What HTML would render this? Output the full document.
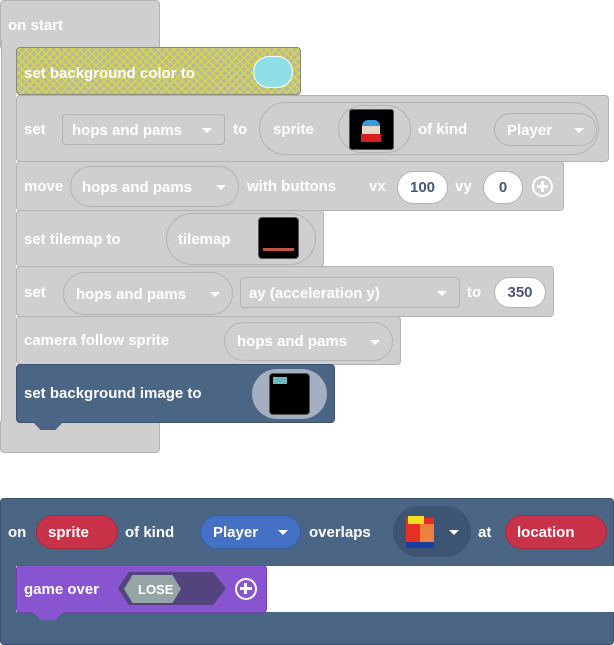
<!DOCTYPE html>
<html><head><style>
*{margin:0;padding:0;box-sizing:border-box}
body{width:614px;height:645px;background:#fff;position:relative;overflow:hidden;font:bold 15px "Liberation Sans",sans-serif;color:#fff}
.a{position:absolute}
.g{background:#cfcfcf;border:1px solid #b3b3b3;border-radius:4px}
.t{position:absolute;white-space:nowrap;line-height:18px;margin-top:2px}
.pill{position:absolute;border:1px solid #b3b3b3;border-radius:30px}
.dd::after{content:"";position:absolute;right:12px;top:50%;margin-top:-2px;border-left:5px solid transparent;border-right:5px solid transparent;border-top:5px solid #fff}
.w{position:absolute;background:#fff;border:1px solid #b3b3b3;border-radius:20px;color:#4a5874;text-align:center}
.notch{position:absolute;width:30px;height:8px;clip-path:polygon(0 0,100% 0,75% 100%,25% 100%)}
</style></head><body>

<!-- on start -->
<div class="a g" style="left:0;top:0;width:160px;height:50px"></div>
<div class="a" style="left:1px;top:40px;width:15px;height:390px;background:#cfcfcf;border-left:1px solid #b3b3b3"></div>
<div class="a g" style="left:0;top:421px;width:160px;height:32px;border-top:none;border-radius:0 0 4px 4px"></div>
<div class="t" style="left:8px;top:15px">on start</div>

<!-- set background color -->
<div class="a" style="left:16px;top:47px;width:285px;height:48px;border:1px solid #8a8a70;border-radius:4px;background-color:#b8b8a0;background-image:repeating-linear-gradient(45deg,transparent 0 4px,#d6d64a 4px 5.5px),repeating-linear-gradient(-45deg,transparent 0 4px,#d6d64a 4px 5.5px)"></div>
<div class="notch" style="left:33px;top:95px;background:#c6c690"></div>
<div class="t" style="left:24px;top:63px">set background color to</div>
<div class="a" style="left:253px;top:56px;width:40px;height:32px;background:#8ee0e6;border:1px solid #fff;border-radius:16px"></div>

<!-- set sprite -->
<div class="a g" style="left:16px;top:95px;width:593px;height:67px"></div>
<div class="t" style="left:24px;top:119px">set</div>
<div class="a dd" style="left:62px;top:114px;width:163px;height:31px;border:1px solid #b3b3b3;border-radius:4px"><span class="t" style="left:9px;top:5px">hops and pams</span></div>
<div class="t" style="left:233px;top:119px">to</div>
<div class="pill" style="left:259px;top:102px;width:340px;height:53px"></div>
<div class="t" style="left:273px;top:119px">sprite</div>
<div class="pill" style="left:338px;top:105px;width:73px;height:48px"></div>
<div class="a" style="left:349px;top:109px;width:45px;height:41px;background:#000;border-radius:3px;border:1px solid #555"></div>
<div class="a" style="left:362px;top:120px;width:18px;height:6px;background:#3a9bd8;border-radius:6px 6px 0 0"></div>
<div class="a" style="left:362px;top:126px;width:18px;height:8px;background:#e8d8c8"></div>
<div class="a" style="left:361px;top:134px;width:20px;height:8px;background:#d82020"></div>
<div class="t" style="left:418px;top:119px">of kind</div>
<div class="pill dd" style="left:494px;top:113px;width:103px;height:33px"><span class="t" style="left:12px;top:6px">Player</span></div>

<!-- move -->
<div class="a g" style="left:16px;top:161px;width:548px;height:50px"></div>
<div class="t" style="left:24px;top:176px">move</div>
<div class="pill dd" style="left:70px;top:166px;width:169px;height:41px"><span class="t" style="left:11px;top:10px">hops and pams</span></div>
<div class="t" style="left:247px;top:176px">with buttons</div>
<div class="t" style="left:369px;top:176px">vx</div>
<div class="w" style="left:397px;top:171px;width:51px;height:33px;line-height:31px">100</div>
<div class="t" style="left:455px;top:176px">vy</div>
<div class="w" style="left:483px;top:171px;width:40px;height:33px;line-height:31px">0</div>
<div class="a" style="left:532px;top:176px;width:21px;height:21px;border:2px solid #fff;border-radius:50%"></div>
<div class="a" style="left:537px;top:185px;width:11px;height:3px;background:#fff"></div>
<div class="a" style="left:541px;top:181px;width:3px;height:11px;background:#fff"></div>

<!-- set tilemap -->
<div class="a g" style="left:16px;top:210px;width:308px;height:57px"></div>
<div class="t" style="left:24px;top:229px">set tilemap to</div>
<div class="pill" style="left:166px;top:213px;width:150px;height:52px"></div>
<div class="t" style="left:178px;top:229px">tilemap</div>
<div class="a" style="left:258px;top:217px;width:41px;height:42px;background:#000;border-radius:4px;border:1px solid #555"></div>
<div class="a" style="left:263px;top:248px;width:31px;height:3px;background:#c0563a"></div>

<!-- set ay -->
<div class="a g" style="left:16px;top:266px;width:538px;height:51px"></div>
<div class="t" style="left:24px;top:282px">set</div>
<div class="pill dd" style="left:63px;top:272px;width:170px;height:43px"><span class="t" style="left:12px;top:11px">hops and pams</span></div>
<div class="a dd" style="left:240px;top:277px;width:220px;height:31px;border:1px solid #b3b3b3;border-radius:4px"><span class="t" style="left:8px;top:5px">ay (acceleration y)</span></div>
<div class="t" style="left:467px;top:282px">to</div>
<div class="w" style="left:494px;top:277px;width:52px;height:31px;line-height:29px">350</div>

<!-- camera -->
<div class="a g" style="left:16px;top:316px;width:385px;height:49px"></div>
<div class="t" style="left:24px;top:330px">camera follow sprite</div>
<div class="pill dd" style="left:224px;top:322px;width:169px;height:39px"><span class="t" style="left:12px;top:8px">hops and pams</span></div>

<!-- set background image -->
<div class="a" style="left:16px;top:364px;width:319px;height:59px;background:#4b6584;border:1px solid #3c5170;border-radius:4px"></div>
<div class="notch" style="left:33px;top:422px;background:#4b6584"></div>
<div class="t" style="left:24px;top:383px">set background image to</div>
<div class="a" style="left:252px;top:369px;width:75px;height:50px;background:#a5afc2;border-radius:25px"></div>
<div class="a" style="left:269px;top:373px;width:41px;height:42px;background:#000;border-radius:4px;border:1px solid #555"></div>
<div class="a" style="left:273px;top:377px;width:14px;height:7px;background:#6fb5c0"></div>

<!-- event block -->
<div class="a" style="left:0;top:498px;width:614px;height:68px;background:#4b6584;border:1px solid #3c5170;border-radius:4px 4px 0 0;border-bottom:none"></div>
<div class="a" style="left:0;top:565px;width:16px;height:50px;background:#4b6584;border-left:1px solid #3c5170"></div>
<div class="a" style="left:0;top:612px;width:614px;height:33px;background:#4b6584;border:1px solid #3c5170;border-top:none;border-radius:0 0 4px 4px"></div>
<div class="t" style="left:8px;top:522px">on</div>
<div class="a" style="left:36px;top:515px;width:82px;height:34px;background:#c8334a;border:1px solid #a82a3e;border-radius:17px"><span class="t" style="left:11px;top:6px">sprite</span></div>
<div class="t" style="left:125px;top:522px">of kind</div>
<div class="a dd" style="left:200px;top:515px;width:101px;height:34px;background:#4471c4;border:1px solid #365da5;border-radius:17px"><span class="t" style="left:12px;top:6px">Player</span></div>
<div class="t" style="left:309px;top:522px">overlaps</div>
<div class="a dd" style="left:393px;top:506px;width:78px;height:51px;background:#3d5472;border-radius:26px"></div>
<div class="a" style="left:406px;top:518px;width:28px;height:30px;background:#e83020"></div>
<div class="a" style="left:408px;top:516px;width:16px;height:8px;background:#f0e020"></div>
<div class="a" style="left:420px;top:524px;width:14px;height:18px;background:#f08040"></div>
<div class="a" style="left:406px;top:542px;width:28px;height:6px;background:#1840a0"></div>
<div class="t" style="left:478px;top:522px">at</div>
<div class="a" style="left:505px;top:515px;width:102px;height:34px;background:#c8334a;border:1px solid #a82a3e;border-radius:17px"><span class="t" style="left:11px;top:6px">location</span></div>

<!-- game over -->
<div class="a" style="left:16px;top:565px;width:251px;height:48px;background:#8854d0;border:1px solid #7040b0;border-radius:4px"></div>
<div class="notch" style="left:33px;top:612px;background:#8854d0"></div>
<div class="t" style="left:24px;top:579px">game over</div>
<div class="a" style="left:118px;top:572px;width:108px;height:33px;background:#54447e;clip-path:polygon(10% 0,88% 0,100% 50%,88% 100%,10% 100%,0 50%)"></div>
<div class="a" style="left:124px;top:575px;width:57px;height:28px;background:#95a5a6;clip-path:polygon(15% 0,85% 0,100% 50%,85% 100%,15% 100%,0 50%)"></div>
<div class="t" style="left:138px;top:579px;font-size:13px">LOSE</div>
<div class="a" style="left:235px;top:578px;width:22px;height:22px;border:2px solid #fff;border-radius:50%"></div>
<div class="a" style="left:240px;top:587px;width:12px;height:3px;background:#fff"></div>
<div class="a" style="left:244px;top:583px;width:3px;height:11px;background:#fff"></div>
</body></html>
